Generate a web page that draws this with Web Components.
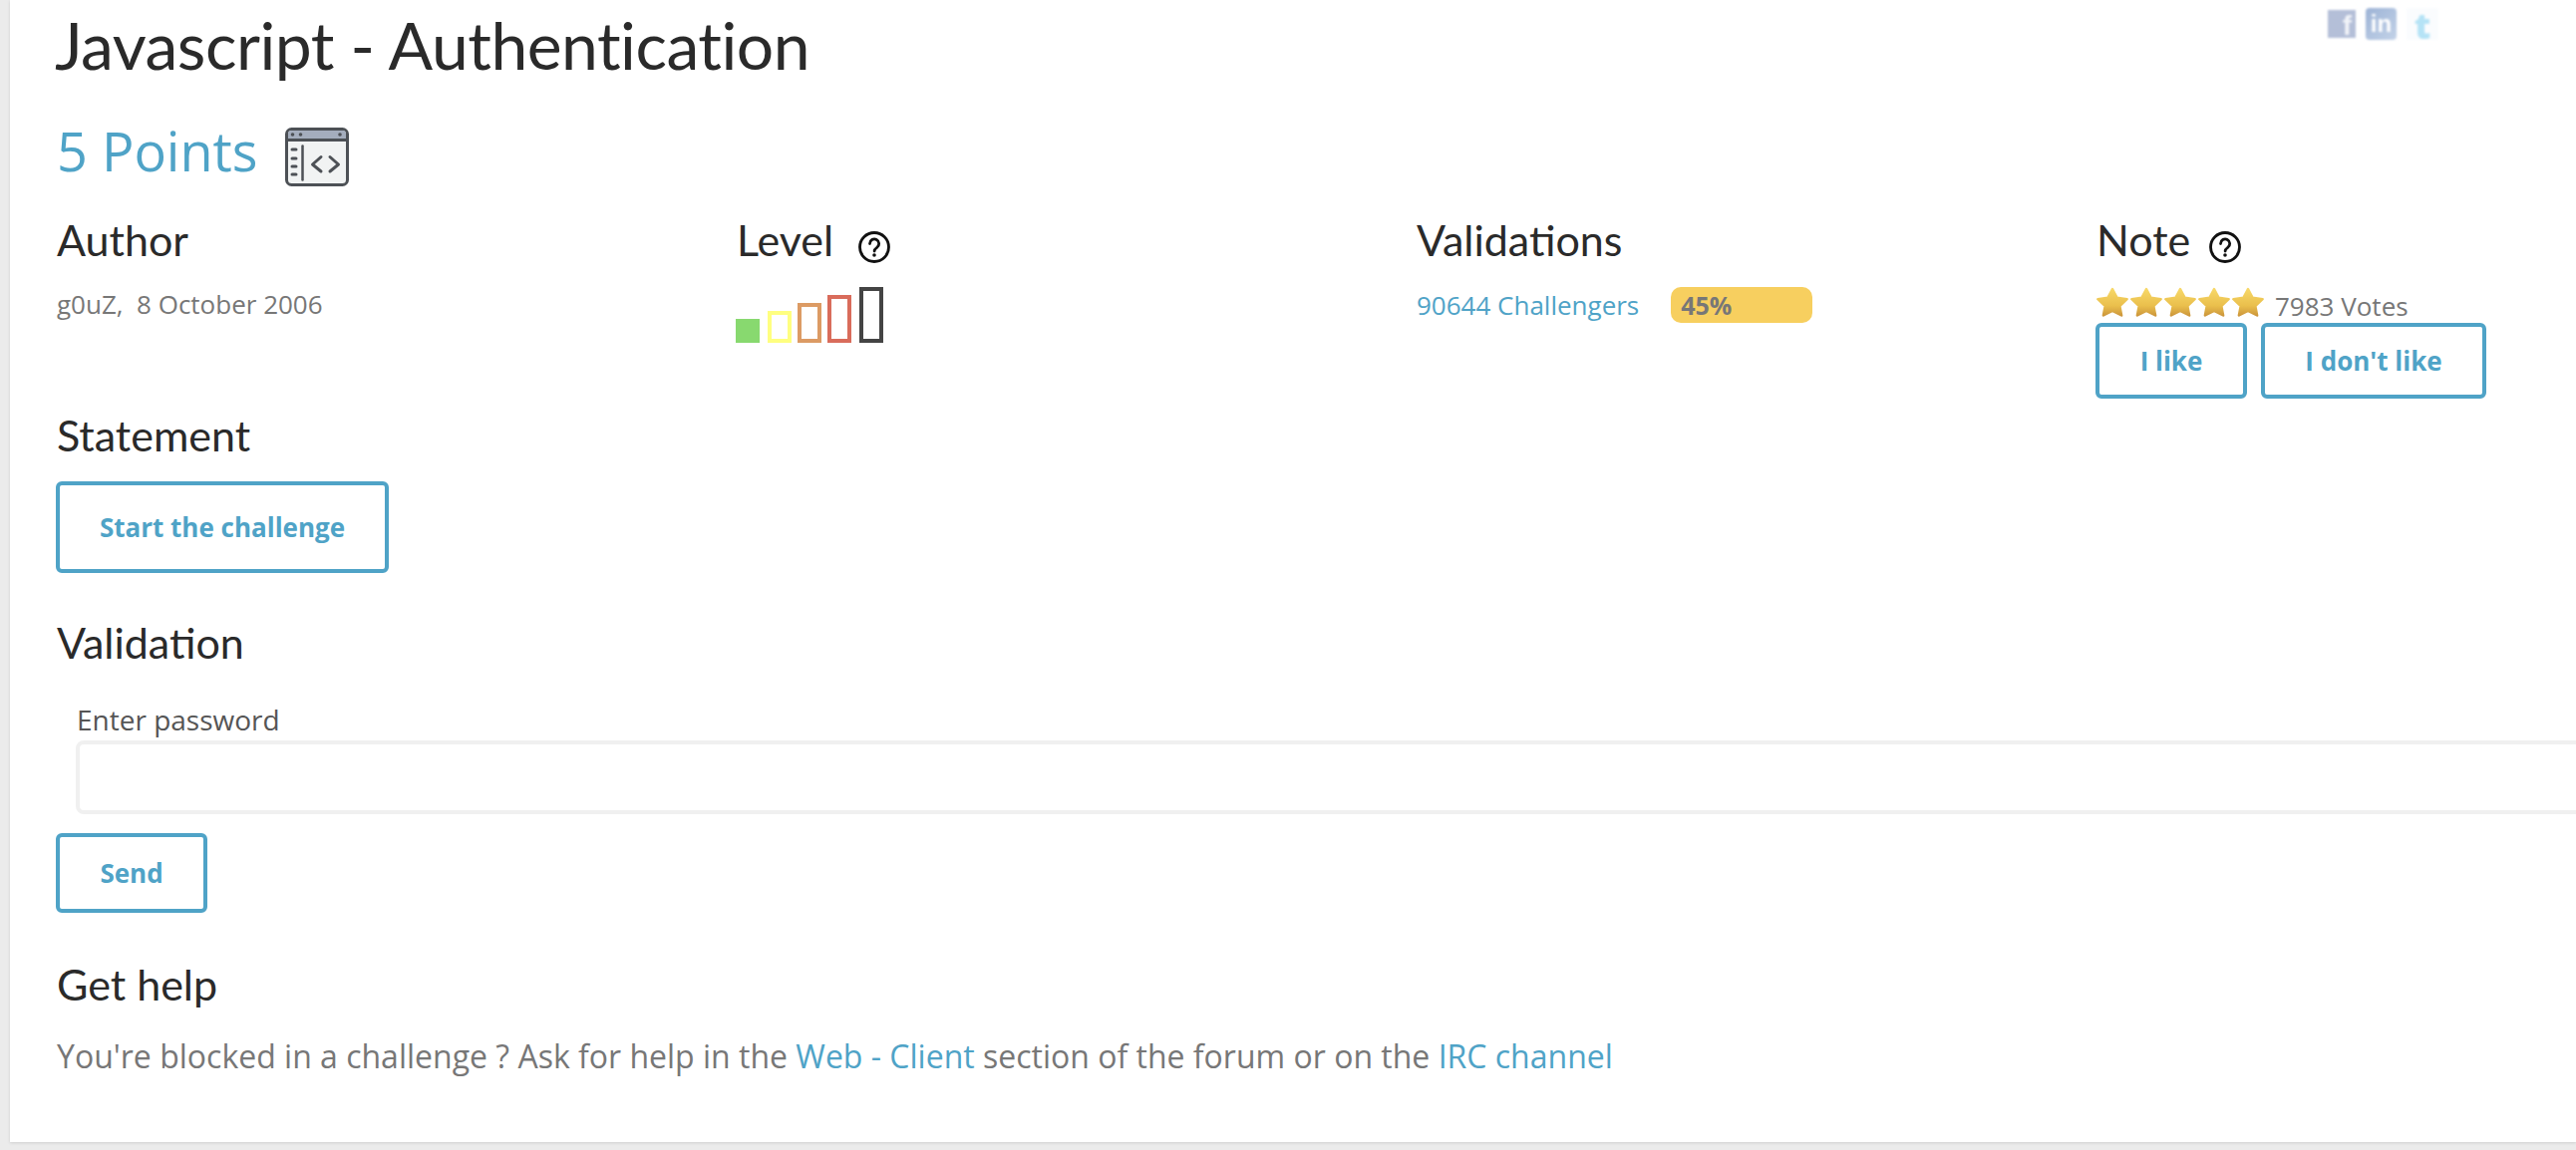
<!DOCTYPE html>
<html>
<head>
<meta charset="utf-8">
<title>Javascript - Authentication</title>
<style>
html, body { margin: 0; height: 100%; overflow: hidden; background: #ebebeb; }
body { font-family: "Open Sans", "Liberation Sans", sans-serif; color: #777; }
</style>
</head>
<body>
<challenge-page>
	<challenge-header slot="header" title-text="Javascript - Authentication" points="5 Points"></challenge-header>
	<challenge-meta slot="meta" heading="Author">g0uZ,&nbsp; 8 October 2006</challenge-meta>
	<challenge-meta slot="meta" heading="Level" help="25"><level-bars></level-bars></challenge-meta>
	<challenge-meta slot="meta" heading="Validations"><valid-stats count="90644 Challengers" percent="45%"></valid-stats></challenge-meta>
	<challenge-meta slot="meta" heading="Note" help="19"><note-votes votes="7983 Votes"></note-votes></challenge-meta>
	<statement-section slot="body"></statement-section>
	<validation-section slot="body"></validation-section>
	<help-section slot="body"></help-section>
</challenge-page>

<script>
const headingFont = 'font-family: Lato, "Open Sans", sans-serif;';

class ChallengePage extends HTMLElement {
	constructor() {
		super();
		this.attachShadow({ mode: 'open' });
		this.shadowRoot.innerHTML = `
<style>
:host { display: block; margin-left: 10px; height: 1146px; background: #fff; box-shadow: 0 1px 3px rgba(0,0,0,.12); overflow: hidden; }
.meta { display: grid; grid-template-columns: repeat(4, 682px); padding-left: 47px; }
</style>
<slot name="header"></slot>
<div class="meta"><slot name="meta"></slot></div>
<slot name="body"></slot>`;
	}
}

class ChallengeHeader extends HTMLElement {
	constructor() {
		super();
		this.attachShadow({ mode: 'open' });
		this.shadowRoot.innerHTML = `
<style>
:host { display: block; padding-left: 45px; color: #2a2a2a; }
.top { display: flex; justify-content: space-between; height: 90px; }
h1 { margin: 0; ${headingFont} font-weight: 400; font-size: 66px; line-height: 89px; letter-spacing: -.5px; }
.points { display: flex; align-items: flex-start; gap: 27px; height: 132px; }
.points span { font-family: "Open Sans", sans-serif; font-size: 54px; line-height: 64px; color: #4fa3c7; margin-left: 2px; margin-top: 29px; font-weight: 400; }
svg { width: 64px; height: 59px; margin-top: 38px; }
</style>
<div class="top">
	<h1 id="title"></h1>
	<share-icons></share-icons>
</div>
<div class="points">
	<span id="points"></span>
	<svg viewBox="0 0 64 59" fill="none">
		<rect x="1.5" y="1.5" width="61" height="56" rx="5" fill="#f1f3f3" stroke="#4d5156" stroke-width="3"/>
		<path d="M3 12V6a3 3 0 0 1 3-3h52a3 3 0 0 1 3 3v6z" fill="#a4adbd"/>
		<path d="M3 12.5h58" stroke="#4d5156" stroke-width="3"/>
		<circle cx="7.5" cy="7" r="1.8" fill="#4d5156"/><circle cx="15.5" cy="7" r="1.8" fill="#4d5156"/><circle cx="55" cy="7" r="1.8" fill="#4d5156"/>
		<path d="M7 22h4M7 31h4M7 39h4M7 47h4" stroke="#4d5156" stroke-width="3" stroke-linecap="round"/>
		<path d="M17.5 18.5v34" stroke="#4d5156" stroke-width="2.5" stroke-linecap="round"/>
		<path d="M36 29.5l-8.500 7.500 8.500 7M45 29.500l8.500 7.500-8.500 7" stroke="#4d5156" stroke-width="3" stroke-linecap="round" stroke-linejoin="round"/>
	</svg>
</div>`;
		this.shadowRoot.getElementById('title').textContent = this.getAttribute('title-text');
		this.shadowRoot.getElementById('points').textContent = this.getAttribute('points');
	}
}

class ShareIcons extends HTMLElement {
	constructor() {
		super();
		this.attachShadow({ mode: 'open' });
		this.shadowRoot.innerHTML = `
<style>
:host { display: flex; gap: 10px; padding: 8px 138px 0 0; align-items: flex-start; height: 32px; font-family: "Liberation Sans", sans-serif; font-weight: 700; filter: blur(.8px); }
b { display: flex; align-items: center; justify-content: center; box-sizing: border-box; }
.fb { width: 28px; height: 28px; margin-top: 2px; background: #b4bfd8; color: #f2f4f9; font-size: 28px; line-height: 28px; justify-content: flex-end; padding: 3px 4px 0 0; }
.in { width: 31px; height: 32px; border-radius: 4px; background: linear-gradient(135deg, #9db3d6, #c3d3e8); color: #fff; font-size: 24px; line-height: 32px; }
.tw { width: 32px; height: 32px; padding-top: 4px; background: #fafcfe; color: #b5e3f6; font: 800 36px/28px "Open Sans", sans-serif; }
</style>
<b class="fb">f</b><b class="in">in</b><b class="tw">t</b>`;
	}
}

class HelpIcon extends HTMLElement {
	constructor() {
		super();
		this.attachShadow({ mode: 'open' });
		this.shadowRoot.innerHTML = `
<style>
:host { display: inline-flex; width: 32px; height: 32px; }
svg { width: 32px; height: 32px; }
</style>
<svg viewBox="0 0 32 32" fill="none">
	<circle cx="16" cy="16" r="14.5" stroke="#111" stroke-width="2.8"/>
	<path d="M11.500 12.500a4.600 4.600 0 1 1 7.200 3.800c-1.700 1.200-2.600 2-2.600 3.800" stroke="#111" stroke-width="2.800" stroke-linecap="round"/>
	<circle cx="16" cy="24" r="1.800" fill="#111"/>
</svg>`;
	}
}

class ChallengeMeta extends HTMLElement {
	constructor() {
		super();
		this.attachShadow({ mode: 'open' });
		this.shadowRoot.innerHTML = `
<style>
:host { display: block; height: 189px; }
h3 { margin: 0; display: flex; align-items: flex-end; height: 38px; ${headingFont} font-weight: 400; font-size: 43px; line-height: 38px; color: #2a2a2a; }
h3 help-icon { margin-bottom: -4px; }
.content { margin-top: 28px; font-size: 26px; line-height: 34px; color: #777; }
</style>
<h3><span id="h"></span></h3>
<div class="content"><slot></slot></div>`;
		this.shadowRoot.getElementById('h').textContent = this.getAttribute('heading');
		if (this.hasAttribute('help')) {
			const icon = document.createElement('help-icon');
			icon.style.marginLeft = this.getAttribute('help') + 'px';
			this.shadowRoot.querySelector('h3').appendChild(icon);
		}
	}
}

class LevelBars extends HTMLElement {
	constructor() {
		super();
		this.attachShadow({ mode: 'open' });
		this.shadowRoot.innerHTML = `
<style>
:host { display: flex; align-items: flex-end; height: 56px; margin-left: -1px; }
i { display: block; box-sizing: border-box; width: 24px; border: 4px solid; }
</style>
<i style="height:24px;background:#88d96f;border-color:#88d96f"></i>
<i style="height:32px;border-color:#ffff80;margin-left:8px"></i>
<i style="height:40px;border-color:#dc9b64;margin-left:6px"></i>
<i style="height:48px;border-color:#d96c5b;margin-left:6px"></i>
<i style="height:56px;border-color:#444;margin-left:8px"></i>`;
	}
}

class ValidStats extends HTMLElement {
	constructor() {
		super();
		this.attachShadow({ mode: 'open' });
		this.shadowRoot.innerHTML = `
<style>
:host { display: flex; align-items: center; gap: 32px; }
a { color: #4fa3c7; text-decoration: none; }
.bar { box-sizing: border-box; width: 142px; height: 36px; border-radius: 10px; background: #f7cf5f; color: #777; font-weight: 700; font-size: 25px; line-height: 36px; padding-left: 10px; }
</style>
<a id="c"></a><div class="bar" id="p"></div>`;
		this.shadowRoot.getElementById('c').textContent = this.getAttribute('count');
		this.shadowRoot.getElementById('p').textContent = this.getAttribute('percent');
	}
}

class NoteVotes extends HTMLElement {
	constructor() {
		super();
		this.attachShadow({ mode: 'open' });
		const star = `<svg viewBox="0 0 34 30"><path d="M17 2l4.600 8.800 10 1.400-7.300 6.800 1.800 9.500-9.100-4.500-9.100 4.500 1.800-9.500-7.300-6.800 10-1.400z" fill="url(#g)" stroke="url(#g)" stroke-width="2.500" stroke-linejoin="round"/></svg>`;
		this.shadowRoot.innerHTML = `
<style>
:host { display: block; margin-left: -1px; }
.stars { display: flex; align-items: flex-start; height: 36px; }
svg { display: block; width: 34px; height: 30px; }
.stars svg { filter: blur(.5px); }
.defs { position: absolute; width: 0; height: 0; }
span { margin: 2px 0 0 10px; line-height: 34px; }
.btns { display: flex; gap: 14px; }
</style>
<svg class="defs"><defs><linearGradient id="g" gradientUnits="userSpaceOnUse" x1="0" y1="2" x2="0" y2="30"><stop offset="0" stop-color="#f7d868"/><stop offset=".6" stop-color="#eabf4c"/><stop offset="1" stop-color="#c9923a"/></linearGradient></defs></svg>
<div class="stars">${star.repeat(5)}<span id="v"></span></div>
<div class="btns"><outline-button w="152" h="76">I like</outline-button><outline-button w="226" h="76">I don't like</outline-button></div>`;
		this.shadowRoot.getElementById('v').textContent = this.getAttribute('votes');
	}
}

class OutlineButton extends HTMLElement {
	constructor() {
		super();
		this.attachShadow({ mode: 'open' });
		const w = this.getAttribute('w'), h = this.getAttribute('h');
		this.shadowRoot.innerHTML = `
<style>
:host { display: inline-block; vertical-align: top; }
button { display: block; box-sizing: border-box; width: ${w}px; height: ${h}px; padding: 0; background: #fff; border: 4px solid #4fa3c7; border-radius: 6px; color: #4fa3c7; font: 700 26px "Open Sans", sans-serif; }
</style>
<button><slot></slot></button>`;
	}
}

class SectionTitle extends HTMLElement {
	constructor() {
		super();
		this.attachShadow({ mode: 'open' });
		this.shadowRoot.innerHTML = `
<style>
:host { display: block; ${headingFont} font-weight: 400; font-size: 43px; line-height: 50px; color: #2a2a2a; }
</style>
<slot></slot>`;
	}
}

class StatementSection extends HTMLElement {
	constructor() {
		super();
		this.attachShadow({ mode: 'open' });
		this.shadowRoot.innerHTML = `
<style>
:host { display: block; padding: 1px 0 0 47px; height: 208px; }
section-title { margin-bottom: 21px; }
outline-button { margin-left: -1px; }
</style>
<section-title>Statement</section-title>
<outline-button w="334" h="92">Start the challenge</outline-button>`;
	}
}

class ValidationSection extends HTMLElement {
	constructor() {
		super();
		this.attachShadow({ mode: 'open' });
		this.shadowRoot.innerHTML = `
<style>
:host { display: block; padding-left: 47px; height: 343px; }
label { display: block; margin: 35px 0 0 20px; font-size: 28px; line-height: 34px; color: #555; }
input { display: block; box-sizing: border-box; width: 2600px; height: 74px; margin: 4px 0 19px 19px; border: 4px solid #f0f0f0; border-radius: 8px; background: #fff; outline: none; }
outline-button { margin-left: -1px; }
</style>
<section-title>Validation</section-title>
<label for="pw">Enter password</label>
<input id="pw" type="password">
<outline-button w="152" h="80">Send</outline-button>`;
	}
}

class HelpSection extends HTMLElement {
	constructor() {
		super();
		this.attachShadow({ mode: 'open' });
		this.shadowRoot.innerHTML = `
<style>
:host { display: block; padding-left: 47px; }
p { margin: 27px 0 0; font-size: 32px; line-height: 40px; color: #777; }
a { color: #4fa3c7; text-decoration: none; }
</style>
<section-title>Get help</section-title>
<p>You're blocked in a challenge ? Ask for help in the <a>Web - Client</a> section of the forum or on the <a>IRC channel</a></p>`;
	}
}

customElements.define('challenge-page', ChallengePage);
customElements.define('share-icons', ShareIcons);
customElements.define('challenge-header', ChallengeHeader);
customElements.define('help-icon', HelpIcon);
customElements.define('challenge-meta', ChallengeMeta);
customElements.define('level-bars', LevelBars);
customElements.define('valid-stats', ValidStats);
customElements.define('outline-button', OutlineButton);
customElements.define('note-votes', NoteVotes);
customElements.define('section-title', SectionTitle);
customElements.define('statement-section', StatementSection);
customElements.define('validation-section', ValidationSection);
customElements.define('help-section', HelpSection);
</script>
</body>
</html>
